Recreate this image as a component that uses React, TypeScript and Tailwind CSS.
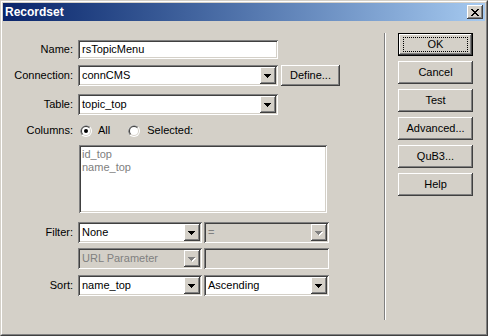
import React from "react";

const raised =
  "shadow-[inset_-1px_-1px_#404040,inset_1px_1px_#ffffff,inset_-2px_-2px_#808080,inset_2px_2px_#d4d0c8]";
const sunken =
  "shadow-[inset_1px_1px_#808080,inset_-1px_-1px_#ffffff,inset_2px_2px_#404040,inset_-2px_-2px_#d4d0c8]";

function Arrow({ disabled }: { disabled?: boolean }) {
  const rows = [
    [0, 0, 7],
    [1, 1, 5],
    [2, 2, 3],
    [3, 3, 1],
  ];
  return (
    <svg width="8" height="5" viewBox="0 0 8 5" shapeRendering="crispEdges">
      {disabled &&
        rows.map(([x, y, w]) => (
          <rect key={`s${y}`} x={x + 1} y={y + 1} width={w} height={1} fill="#ffffff" />
        ))}
      {rows.map(([x, y, w]) => (
        <rect key={y} x={x} y={y} width={w} height={1} fill={disabled ? "#808080" : "#000000"} />
      ))}
    </svg>
  );
}

function Combo({
  value,
  className,
  disabled,
}: {
  value: string;
  className: string;
  disabled?: boolean;
}) {
  return (
    <div
      className={`flex h-[21px] p-[2px] ${sunken} ${disabled ? "bg-[#d4d0c8]" : "bg-white"} ${className}`}
    >
      <div
        className={`flex-1 pl-[2px] leading-[17px] truncate ${disabled ? "text-[#808080]" : "text-black"}`}
      >
        {value}
      </div>
      <div className={`w-[16px] h-[17px] flex items-center justify-center bg-[#d4d0c8] ${raised}`}>
        <div className="pt-[1px]">
          <Arrow disabled={disabled} />
        </div>
      </div>
    </div>
  );
}

function Radio({ checked }: { checked?: boolean }) {
  return (
    <svg width="12" height="12" viewBox="0 0 12 12">
      <circle cx="6" cy="6" r="6" fill="#ffffff" />
      <path d="M10.24 1.76 A6 6 0 0 0 1.76 10.24 Z" fill="#808080" />
      <circle cx="6" cy="6" r="5" fill="#d4d0c8" />
      <path d="M9.54 2.46 A5 5 0 0 0 2.46 9.54 Z" fill="#404040" />
      <circle cx="6" cy="6" r="4" fill="#ffffff" />
      {checked && <circle cx="6" cy="6" r="2" fill="#000000" />}
    </svg>
  );
}

function Label({ text }: { text: string }) {
  return <div className="w-[75px] pr-[5px] text-right shrink-0">{text}</div>;
}

function PushButton({ label, isDefault }: { label: string; isDefault?: boolean }) {
  if (isDefault) {
    return (
      <div className="w-[75px] h-[23px] border border-black">
        <div className={`relative h-full flex items-center justify-center bg-[#d4d0c8] ${raised}`}>
          {label}
          <div className="absolute inset-x-[4px] inset-y-[3px] border border-dotted border-black" />
        </div>
      </div>
    );
  }
  return (
    <div className={`w-[75px] h-[23px] flex items-center justify-center bg-[#d4d0c8] ${raised}`}>
      {label}
    </div>
  );
}

export default function App() {
  return (
    <div className="w-[488px] h-[336px] bg-[#d4d0c8] font-['Liberation_Sans',Arial,sans-serif] text-[11px] text-black">
      {/* window frame */}
      <div className="h-full border border-t-[#d4d0c8] border-l-[#d4d0c8] border-r-[#404040] border-b-[#404040]">
        <div className="h-full border border-t-white border-l-white border-r-[#808080] border-b-[#808080] p-[1px] flex flex-col">
          {/* title bar */}
          <div className="h-[18px] shrink-0 flex items-center justify-between pl-[2px] pr-[2px] bg-linear-to-r from-[#0a246a] to-[#a6caf0]">
            <span className="text-white font-bold text-[12px] leading-none">Recordset</span>
            <div className={`w-[16px] h-[14px] flex items-center justify-center bg-[#d4d0c8] ${raised}`}>
              <svg width="8" height="7" viewBox="0 0 8 7" shapeRendering="crispEdges">
                <path d="M0 0h2v1h-2zM6 0h2v1h-2zM1 1h2v1h-2zM5 1h2v1h-2zM2 2h4v1h-4zM3 3h2v1h-2zM2 4h4v1h-4zM1 5h2v1h-2zM5 5h2v1h-2zM0 6h2v1h-2zM6 6h2v1h-2z" fill="#000" />
              </svg>
            </div>
          </div>

          {/* body */}
          <div className="flex flex-1">
            {/* form */}
            <div className="w-[381px] flex flex-col">
              <div className="mt-[19px] flex items-center">
                <Label text="Name:" />
                <div className={`w-[200px] h-[19px] bg-white pl-[4px] leading-[19px] ${sunken}`}>
                  rsTopicMenu
                </div>
              </div>

              <div className="mt-[6px] flex items-center">
                <Label text="Connection:" />
                <Combo value="connCMS" className="w-[200px]" />
                <div className={`ml-[3px] w-[59px] h-[21px] flex items-center justify-center bg-[#d4d0c8] ${raised}`}>
                  Define...
                </div>
              </div>

              <div className="mt-[8px] flex items-center">
                <Label text="Table:" />
                <Combo value="topic_top" className="w-[200px]" />
              </div>

              <div className="mt-[9px] h-[13px] flex items-center">
                <Label text="Columns:" />
                <div className="ml-[2px] flex items-center">
                  <Radio checked />
                  <span className="ml-[6px]">All</span>
                  <div className="ml-[18px]">
                    <Radio />
                  </div>
                  <span className="ml-[7px]">Selected:</span>
                </div>
              </div>

              {/* columns list */}
              <div
                className={`mt-[8px] ml-[76px] w-[248px] h-[68px] bg-white pt-[3px] pl-[3px] text-[#808080] leading-[13px] ${sunken}`}
              >
                <div>id_top</div>
                <div>name_top</div>
              </div>

              <div className="mt-[9px] flex items-center">
                <Label text="Filter:" />
                <Combo value="None" className="w-[124px]" />
                <Combo value="=" className="ml-[2px] w-[125px]" disabled />
              </div>

              <div className="mt-[5px] flex items-center">
                <div className="w-[75px] shrink-0" />
                <Combo value="URL Parameter" className="w-[124px]" disabled />
                <div className={`ml-[2px] w-[125px] h-[21px] bg-[#d4d0c8] ${sunken}`} />
              </div>

              <div className="mt-[6px] flex items-center">
                <Label text="Sort:" />
                <Combo value="name_top" className="w-[124px]" />
                <Combo value="Ascending" className="ml-[2px] w-[125px]" />
              </div>
            </div>

            {/* separator */}
            <div className="mt-[12px] w-[2px] h-[287px] border-l border-l-[#808080] border-r border-r-white" />

            {/* buttons */}
            <div className="ml-[12px] mt-[12px] flex flex-col gap-[5px]">
              <PushButton label="OK" isDefault />
              <PushButton label="Cancel" />
              <PushButton label="Test" />
              <PushButton label="Advanced..." />
              <PushButton label="QuB3..." />
              <PushButton label="Help" />
            </div>
          </div>
        </div>
      </div>
    </div>
  );
}
